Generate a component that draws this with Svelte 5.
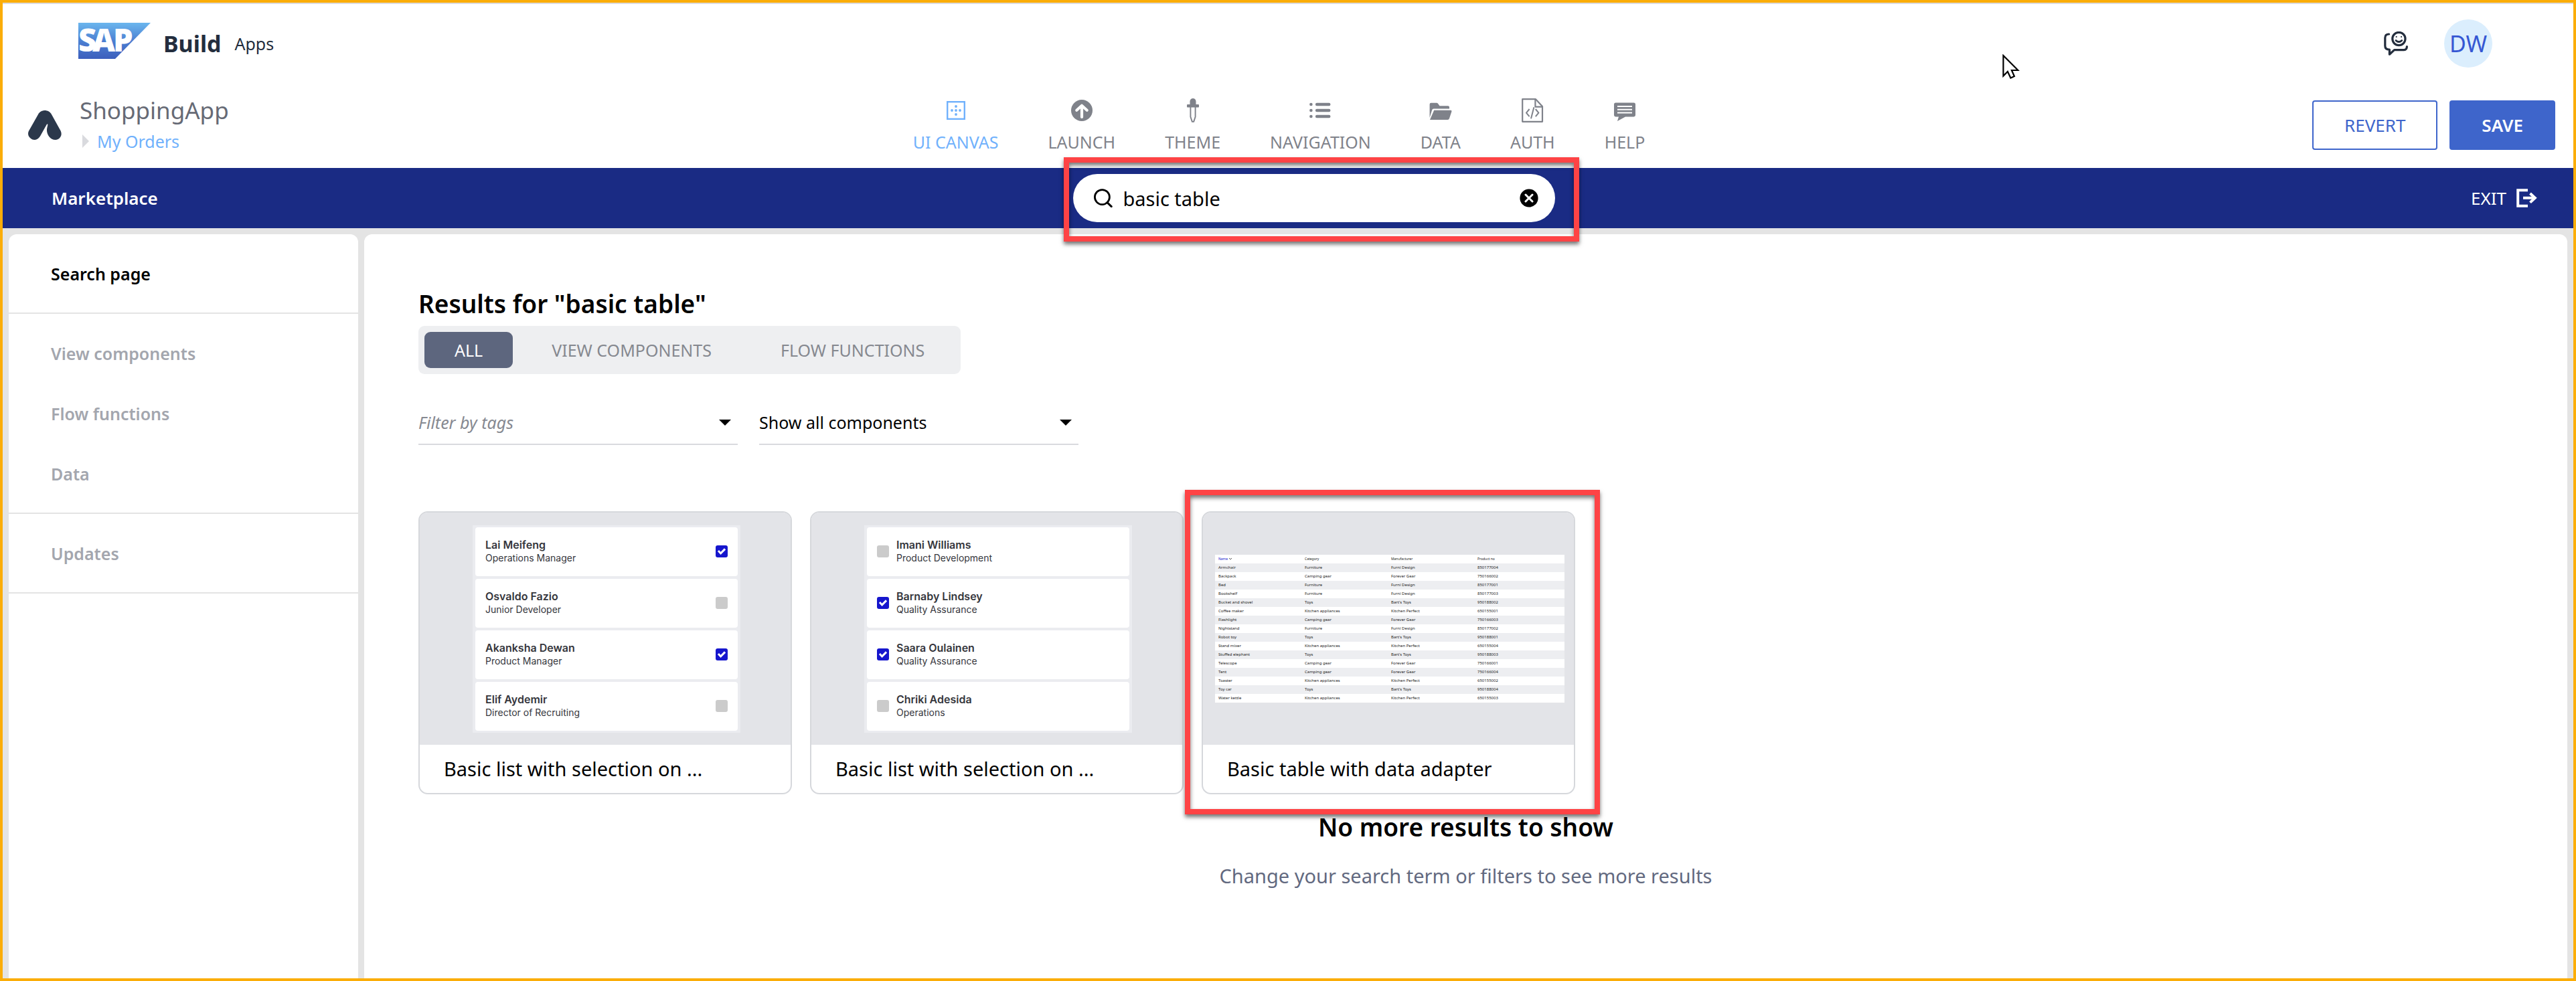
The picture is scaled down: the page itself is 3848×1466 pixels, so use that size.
<script>
  const tools = [
    { id: 'canvas', label: 'UI CANVAS' },
    { id: 'launch', label: 'LAUNCH' },
    { id: 'theme', label: 'THEME' },
    { id: 'navigation', label: 'NAVIGATION' },
    { id: 'data', label: 'DATA' },
    { id: 'auth', label: 'AUTH' },
    { id: 'help', label: 'HELP' }
  ];
  let activeTool = $state('canvas');

  const menu = [['Search page'], ['View components', 'Flow functions', 'Data'], ['Updates']];
  let activePage = $state('Search page');

  let query = $state('basic table');

  const tabs = ['ALL', 'VIEW COMPONENTS', 'FLOW FUNCTIONS'];
  let activeTab = $state('ALL');

  const lists = [
    {
      title: 'Basic list with selection on ...',
      side: 'right',
      people: [
        ['Lai Meifeng', 'Operations Manager', true],
        ['Osvaldo Fazio', 'Junior Developer', false],
        ['Akanksha Dewan', 'Product Manager', true],
        ['Elif Aydemir', 'Director of Recruiting', false]
      ]
    },
    {
      title: 'Basic list with selection on ...',
      side: 'left',
      people: [
        ['Imani Williams', 'Product Development', false],
        ['Barnaby Lindsey', 'Quality Assurance', true],
        ['Saara Oulainen', 'Quality Assurance', true],
        ['Chriki Adesida', 'Operations', false]
      ]
    }
  ];

  const F = ['Furniture', 'Furni Design'];
  const C = ['Camping gear', 'Forever Gear'];
  const T = ['Toys', "Bart's Toys"];
  const K = ['Kitchen appliances', 'Kitchen Perfect'];
  const products = [
    ['Armchair', ...F, '850177004'],
    ['Backpack', ...C, '750166002'],
    ['Bed', ...F, '850177001'],
    ['Bookshelf', ...F, '850177003'],
    ['Bucket and shovel', ...T, '950188002'],
    ['Coffee maker', ...K, '650155001'],
    ['Flashlight', ...C, '750166003'],
    ['Nightstand', ...F, '850177002'],
    ['Robot toy', ...T, '950188001'],
    ['Stand mixer', ...K, '650155004'],
    ['Stuffed elephant', ...T, '950188003'],
    ['Telescope', ...C, '750166001'],
    ['Tent', ...C, '750166004'],
    ['Toaster', ...K, '650155002'],
    ['Toy car', ...T, '950188004'],
    ['Water kettle', ...K, '650155003']
  ];
</script>

{#snippet toolIcon(id)}
  <svg class="tool-icon" viewBox="0 0 36 36" aria-hidden="true">
    {#if id === 'canvas'}
      <rect x="5.2" y="5.2" width="25.6" height="25.6" fill="none" stroke="currentColor" stroke-width="2.4" />
      <g fill="currentColor">
        <circle cx="18" cy="12" r="1.9" /><circle cx="12" cy="18" r="1.9" /><circle cx="18" cy="18" r="1.9" />
        <circle cx="24" cy="18" r="1.9" /><circle cx="18" cy="24" r="1.9" />
      </g>
    {:else if id === 'launch'}
      <circle cx="18" cy="18" r="16" fill="currentColor" />
      <path d="M18 28V12M10.3 17.8L18 10.8L25.7 17.8" fill="none" stroke="#fff" stroke-width="4.2" stroke-linecap="round" stroke-linejoin="round" />
    {:else if id === 'theme'}
      <rect x="13.5" y="0" width="9" height="13" rx="4.5" fill="currentColor" />
      <rect x="9" y="9" width="18" height="4.6" rx="1" fill="currentColor" />
      <path d="M14.4 13V27.5L16.8 34.8H19.2L21.6 27.5V13" fill="none" stroke="currentColor" stroke-width="1.9" />
    {:else if id === 'navigation'}
      <g fill="currentColor">
        <circle cx="4.4" cy="9" r="2.3" /><circle cx="4.4" cy="18" r="2.3" /><circle cx="4.4" cy="27" r="2.3" />
        <rect x="11" y="6.8" width="22.4" height="4.4" rx="2" /><rect x="11" y="15.8" width="22.4" height="4.4" rx="2" />
        <rect x="11" y="24.8" width="22.4" height="4.4" rx="2" />
      </g>
    {:else if id === 'data'}
      <path d="M1.6 29V9Q1.6 6.8 3.8 6.8H12Q13.2 6.8 14 7.8L16.5 11.2H29Q31 11.2 31 13V15.6H7.5Q5.8 15.6 5.2 17.2Z" fill="currentColor" />
      <path d="M8.2 17.8H33Q35 17.8 34.4 19.8L31 30Q30.4 32 28.4 32H2Z" fill="currentColor" />
    {:else if id === 'auth'}
      <g fill="none" stroke="currentColor" stroke-width="2.2" stroke-linejoin="round">
        <path d="M3.2 1.2H23L33 12V34.8H3.2Z" /><path d="M22.4 1.2V12.6H33" />
        <path d="M13.6 16L9 21.6L13.6 27.2M22.8 16L27.4 21.6L22.8 27.2M20.4 13.2L16 30.2" stroke-width="2" />
      </g>
    {:else}
      <path d="M4.5 6.5H31.5Q34 6.5 34 9V25Q34 27.4 31.5 27.4H19L7 34L9 27.4H4.5Q2 27.4 2 25V9Q2 6.5 4.5 6.5Z" fill="currentColor" />
      <path d="M7 12H29M7 16.8H29M7 21.6H29" stroke="#fff" stroke-width="2" />
    {/if}
  </svg>
{/snippet}

{#snippet arrow()}
  <svg class="arrow" viewBox="0 0 18 9" aria-hidden="true"><path d="M0 0H18L9 9Z" /></svg>
{/snippet}

<div class="page">
  <header class="brand-bar">
    <svg class="sap" viewBox="0 0 108 54" role="img" aria-label="SAP">
      <defs>
        <linearGradient id="sap-blue" x1="0" y1="0" x2="0" y2="1">
          <stop offset="0" stop-color="#6bb6ee" /><stop offset=".5" stop-color="#4c80d2" /><stop offset="1" stop-color="#3c5fbd" />
        </linearGradient>
      </defs>
      <path d="M0 0H108L55 54H0Z" fill="url(#sap-blue)" />
      <text x="0 21 52" y="43">SAP</text>
    </svg>
    <strong class="build">Build</strong>
    <span class="apps">Apps</span>
    <button class="chat" aria-label="Feedback">
      <svg viewBox="0 0 36 36" fill="none" stroke="currentColor" stroke-width="3.2" stroke-linecap="round" stroke-linejoin="round">
        <path d="M7.6 4Q1.8 4 1.8 9.5V21.5Q1.8 27.2 8.4 27.2V34.2L15.6 27.6H30Q34.4 27.6 34.4 22.6" />
        <circle cx="22.4" cy="11" r="9.6" />
        <path d="M18 13.4Q22.4 17.6 26.8 13.4" stroke-width="2.8" />
        <path d="M18.6 8H18.8M26 8H26.2" stroke-width="2" />
      </svg>
    </button>
    <button class="avatar">DW</button>
  </header>

  <div class="app-bar">
    <div class="app-side">
      <svg class="app-logo" viewBox="0 0 50 44" aria-hidden="true">
        <path d="M15 6C19-2 31-2 35 6L48.6 30.5C52 38 46.5 44 41 44C32.5 44 27.5 35 28 28.5C28.2 25 30 21.5 29 20.2Q28.4 20.2 27.8 21L18 38.5C14 45 7.5 45 4 42C-1 38.5-.5 33 1.4 30Z" fill="#2b384b" />
      </svg>
      <div class="app-names">
        <h1>ShoppingApp</h1>
        <div class="crumb">
          <svg viewBox="0 0 10 20" aria-hidden="true"><path d="M0 0L10 10L0 20Z" /></svg>
          <a href="#orders">My Orders</a>
        </div>
      </div>
    </div>
    <nav class="tools" aria-label="Tools">
      {#each tools as tool}
        <button class:active={activeTool === tool.id} onclick={() => (activeTool = tool.id)}>
          {@render toolIcon(tool.id)}
          <span>{tool.label}</span>
        </button>
      {/each}
    </nav>
    <div class="app-side actions">
      <button class="revert">REVERT</button>
      <button class="save">SAVE</button>
    </div>
  </div>

  <div class="market-bar">
    <h2>Marketplace</h2>
    <div class="search-wrap">
      <label class="search">
        <svg viewBox="0 0 28 28" fill="none" stroke="currentColor" aria-hidden="true">
          <circle cx="12.4" cy="12.6" r="11" stroke-width="2.8" /><path d="M20 20.6L26.2 26.6" stroke-width="3" stroke-linecap="round" />
        </svg>
        <input type="text" bind:value={query} aria-label="Search the marketplace" />
        <button aria-label="Clear search" onclick={() => (query = '')}>
          <svg viewBox="0 0 28 28" aria-hidden="true">
            <circle cx="14" cy="14" r="13.6" /><path d="M9 9L19 19M19 9L9 19" stroke="#fff" stroke-width="3" stroke-linecap="round" />
          </svg>
        </button>
      </label>
      <div class="highlight around-search"></div>
    </div>
    <button class="exit">
      EXIT
      <svg viewBox="0 0 31 28" fill="none" stroke="currentColor" stroke-width="4" aria-hidden="true">
        <path d="M17 2.2H2.2V25.8H17M10 13.8H27" /><path d="M20.5 7L27.8 13.8L20.5 20.6" />
      </svg>
    </button>
  </div>

  <div class="body">
    <aside>
      {#each menu as group}
        <ul>
          {#each group as entry}
            <li><button class:active={activePage === entry} onclick={() => (activePage = entry)}>{entry}</button></li>
          {/each}
        </ul>
      {/each}
    </aside>

    <main>
      <h2>Results for "basic table"</h2>
      <div class="tabs" role="tablist">
        {#each tabs as tab}
          <button role="tab" aria-selected={activeTab === tab} class:active={activeTab === tab} onclick={() => (activeTab = tab)}>{tab}</button>
        {/each}
      </div>

      <div class="filters">
        <div class="field">
          <select class="tags" aria-label="Tags"><option>Filter by tags</option></select>
          {@render arrow()}
        </div>
        <div class="field">
          <select aria-label="Components"><option>Show all components</option></select>
          {@render arrow()}
        </div>
      </div>

      <ul class="cards">
        {#each lists as list}
          <li>
            <article>
              <div class="preview">
                <div class="people">
                  {#each list.people as [name, role, picked]}
                    <label class="person {list.side}">
                      <input type="checkbox" checked={picked} />
                      <span><b>{name}</b><small>{role}</small></span>
                    </label>
                  {/each}
                </div>
              </div>
              <h3>{list.title}</h3>
            </article>
          </li>
        {/each}
        <li>
          <article>
            <div class="preview wide">
              <table>
                <thead>
                  <tr>
                    <th class="sorted">Name <svg viewBox="0 0 6 4" aria-hidden="true"><path d="M1 1L3 3L5 1" fill="none" stroke="#555" /></svg></th>
                    <th>Category</th><th>Manufacturer</th><th class="rest">Product no</th>
                  </tr>
                </thead>
                <tbody>
                  {#each products as row}
                    <tr>{#each row as cell}<td>{cell}</td>{/each}</tr>
                  {/each}
                </tbody>
              </table>
            </div>
            <h3>Basic table with data adapter</h3>
          </article>
          <div class="highlight around-card"></div>
        </li>
      </ul>

      <div class="end">
        <h2>No more results to show</h2>
        <p>Change your search term or filters to see more results</p>
      </div>
    </main>
  </div>

  <svg class="pointer" viewBox="0 0 26 37" aria-hidden="true">
    <path d="M1.5 2V32.5L8 26L12.5 35.5L18 33L14 24H23.5Z" fill="#fff" stroke="#000" stroke-width="2.2" />
  </svg>
</div>

<style>
  :global(body) {
    margin: 0;
  }
  .page {
    position: relative;
    box-sizing: border-box;
    min-height: 100vh;
    display: flex;
    flex-direction: column;
    border: 4px solid #fbad08;
    background: #fff;
    font-family: 'Noto Sans', 'Open Sans', sans-serif;
    font-size: 25px;
    color: #000;
  }
  h1, h2, h3, p, ul {
    margin: 0;
    padding: 0;
    font-weight: 400;
  }
  ul {
    list-style: none;
  }
  button, input, select {
    margin: 0;
    padding: 0;
    border: 0;
    background: none;
    color: inherit;
    font: inherit;
  }
  button {
    cursor: pointer;
  }
  svg {
    display: block;
    flex: none;
  }

  .brand-bar {
    display: flex;
    align-items: center;
    padding: 23px 121px 23px 113px;
    border-top: 2px solid #dcdcdf;
    color: #232d3d;
  }
  .sap {
    width: 108px;
    margin: 0 19px 8px 0;
    overflow: visible;
  }
  .sap text {
    font-family: 'Open Sans', sans-serif;
    font-size: 47px;
    font-weight: 800;
    fill: #fff;
  }
  .build {
    margin-right: 20px;
    font-size: 34px;
  }
  .apps {
    margin-right: auto;
  }
  .chat svg {
    width: 36px;
  }
  .avatar {
    width: 72px;
    height: 72px;
    margin-left: 54px;
    border-radius: 50%;
    background: #dbeefd;
    color: #3557d3;
    font-size: 34px;
  }

  .app-bar {
    display: flex;
    align-items: center;
    padding: 22px 27px 24px 0;
  }
  .app-side {
    flex: 1 1 0;
    display: flex;
    align-items: center;
  }
  .app-logo {
    width: 50px;
    margin: 0 27px 0 38px;
  }
  .app-names h1 {
    font-size: 35px;
    line-height: 38px;
    color: #666a75;
  }
  .crumb {
    display: flex;
    align-items: center;
    gap: 12px;
    margin-top: 11px;
    padding-left: 4px;
    line-height: 32px;
  }
  .crumb svg {
    width: 10px;
    fill: #d9dade;
  }
  .crumb a {
    color: #70b1fc;
    text-decoration: none;
  }
  .tools {
    display: flex;
    gap: 74px;
  }
  .tools button {
    display: flex;
    flex-direction: column;
    align-items: center;
    gap: 14px;
    line-height: 30px;
    color: #7f828a;
  }
  .tools .active {
    color: #70b1fc;
  }
  .tool-icon {
    width: 36px;
  }
  .actions {
    justify-content: flex-end;
    gap: 18px;
  }
  .actions button {
    box-sizing: border-box;
    height: 74px;
    padding: 0 46px;
    border: 2px solid #3e65cb;
    border-radius: 4px;
    font-size: 26px;
  }
  .actions .revert {
    color: #3e65cb;
  }
  .actions .save {
    background: #3e65cb;
    color: #fff;
    font-weight: 600;
  }

  .market-bar {
    display: flex;
    align-items: center;
    justify-content: space-between;
    height: 90px;
    padding: 0 54px 0 73px;
    background: #1a2b84;
    color: #fff;
  }
  .market-bar h2 {
    font-size: 26px;
    font-weight: 600;
  }
  .search-wrap {
    position: relative;
    width: 720px;
  }
  .search {
    display: flex;
    align-items: center;
    box-sizing: border-box;
    height: 72px;
    padding: 0 25px 0 31px;
    border-radius: 36px;
    background: #fff;
    color: #000;
  }
  .search svg {
    width: 28px;
  }
  .search input {
    flex: 1;
    min-width: 0;
    margin: 0 15px;
    font-size: 29px;
    outline: 0;
  }
  .exit {
    display: flex;
    align-items: center;
    gap: 15px;
    font-size: 26px;
  }
  .exit svg {
    width: 31px;
  }

  .highlight {
    position: absolute;
    z-index: 2;
    border: 8px solid #fe4345;
    box-shadow: 0 4px 6px rgba(0, 0, 0, 0.55), inset 0 4px 6px rgba(0, 0, 0, 0.55);
    pointer-events: none;
  }
  .around-search {
    inset: -25px -36px -29px -14px;
  }
  .around-card {
    inset: -32px -37px -30px -25px;
  }

  .body {
    flex: 1;
    display: flex;
    gap: 9px;
    padding: 9px 9px 0;
    background: #e4e4e4;
  }
  aside {
    flex: none;
    width: 522px;
    border-radius: 12px 12px 0 0;
    background: #fff;
  }
  aside ul {
    padding: 14px 0 13px;
    border-bottom: 2px solid #e4e4e4;
  }
  aside button {
    display: block;
    width: 100%;
    height: 90px;
    padding: 0 63px;
    text-align: left;
    font-weight: 600;
    color: #a3a6ae;
  }
  aside .active {
    color: #000;
  }

  main {
    flex: 1;
    min-width: 0;
    padding: 82px 0 40px;
    border-radius: 12px 12px 0 0;
    background: #fff;
  }
  main > h2 {
    padding: 0 81px;
  }
  main h2 {
    font-size: 37px;
    line-height: 44px;
    font-weight: 600;
  }
  .tabs {
    display: inline-flex;
    gap: 13px;
    margin: 11px 81px 0;
    padding: 9px;
    border-radius: 9px;
    background: #eeeff1;
    vertical-align: top;
  }
  .tabs button {
    height: 54px;
    padding: 0 45px;
    border-radius: 9px;
    color: #85888f;
  }
  .tabs .active {
    background: #5d667e;
    color: #fff;
  }
  .filters {
    display: flex;
    gap: 32px;
    margin: 54px 81px 0;
  }
  .field {
    display: flex;
    align-items: center;
    box-sizing: border-box;
    width: 477px;
    padding: 0 10px 14px 0;
    border-bottom: 2px solid #d9dade;
  }
  .field select {
    flex: 1;
    height: 36px;
    appearance: none;
  }
  .field .tags {
    font-style: italic;
    color: #868991;
  }
  .arrow {
    width: 18px;
  }

  .cards {
    display: flex;
    flex-wrap: wrap;
    gap: 27px;
    margin: 99px 81px 0;
  }
  .cards li {
    position: relative;
    width: 558px;
  }
  article {
    overflow: hidden;
    border: 2px solid #d6d8dc;
    border-radius: 14px;
    background: #fff;
  }
  article h3 {
    padding: 0 36px;
    font-size: 29px;
    line-height: 72px;
    white-space: nowrap;
  }
  .preview {
    display: flex;
    align-items: center;
    justify-content: center;
    height: 347px;
    padding-left: 4px;
    background: #e3e4e8;
  }
  .people {
    display: flex;
    flex-direction: column;
    gap: 4px;
    width: 392px;
    padding: 3px 4px;
    background: #ebecf0;
    font-family: Inter, sans-serif;
    color: #35363c;
  }
  .person {
    display: flex;
    align-items: center;
    gap: 11px;
    height: 73px;
    padding: 0 15px;
    border-radius: 4px;
    background: #fff;
  }
  .person.right {
    flex-direction: row-reverse;
    justify-content: space-between;
  }
  .person b, .person small {
    display: block;
    line-height: 20px;
  }
  .person b {
    font-size: 16px;
    font-weight: 600;
  }
  .person small {
    font-size: 14px;
  }
  .person input {
    width: 18px;
    height: 18px;
    border-radius: 3px;
    background: #cbcbcb;
    appearance: none;
  }
  .person input:checked {
    background: #1616cd;
  }
  .person input:checked::before {
    content: '';
    display: block;
    height: 18px;
    background: #fff;
    clip-path: polygon(16% 50%, 28% 39%, 42% 54%, 72% 24%, 84% 36%, 42% 78%);
  }
  .wide {
    padding: 0 14px 0 18px;
  }
  table {
    width: 100%;
    table-layout: fixed;
    border-collapse: collapse;
    background: #fff;
    font-size: 6px;
    line-height: 13px;
    color: #222;
  }
  th, td {
    height: 13px;
    padding: 0 0 0 5px;
    text-align: left;
    font-weight: 400;
    white-space: nowrap;
  }
  th {
    width: 124px;
    font-size: 5px;
  }
  .rest {
    width: auto;
  }
  .sorted {
    color: #1616cd;
  }
  .sorted svg {
    display: inline-block;
    width: 6px;
  }
  tbody tr:nth-child(odd) {
    background: #edeef1;
  }

  .end {
    margin-top: 27px;
    text-align: center;
  }
  .end p {
    margin-top: 31px;
    font-size: 29px;
    line-height: 40px;
    color: #62697f;
  }
  .pointer {
    position: absolute;
    z-index: 3;
    left: 2987px;
    top: 77px;
    width: 26px;
  }
</style>
